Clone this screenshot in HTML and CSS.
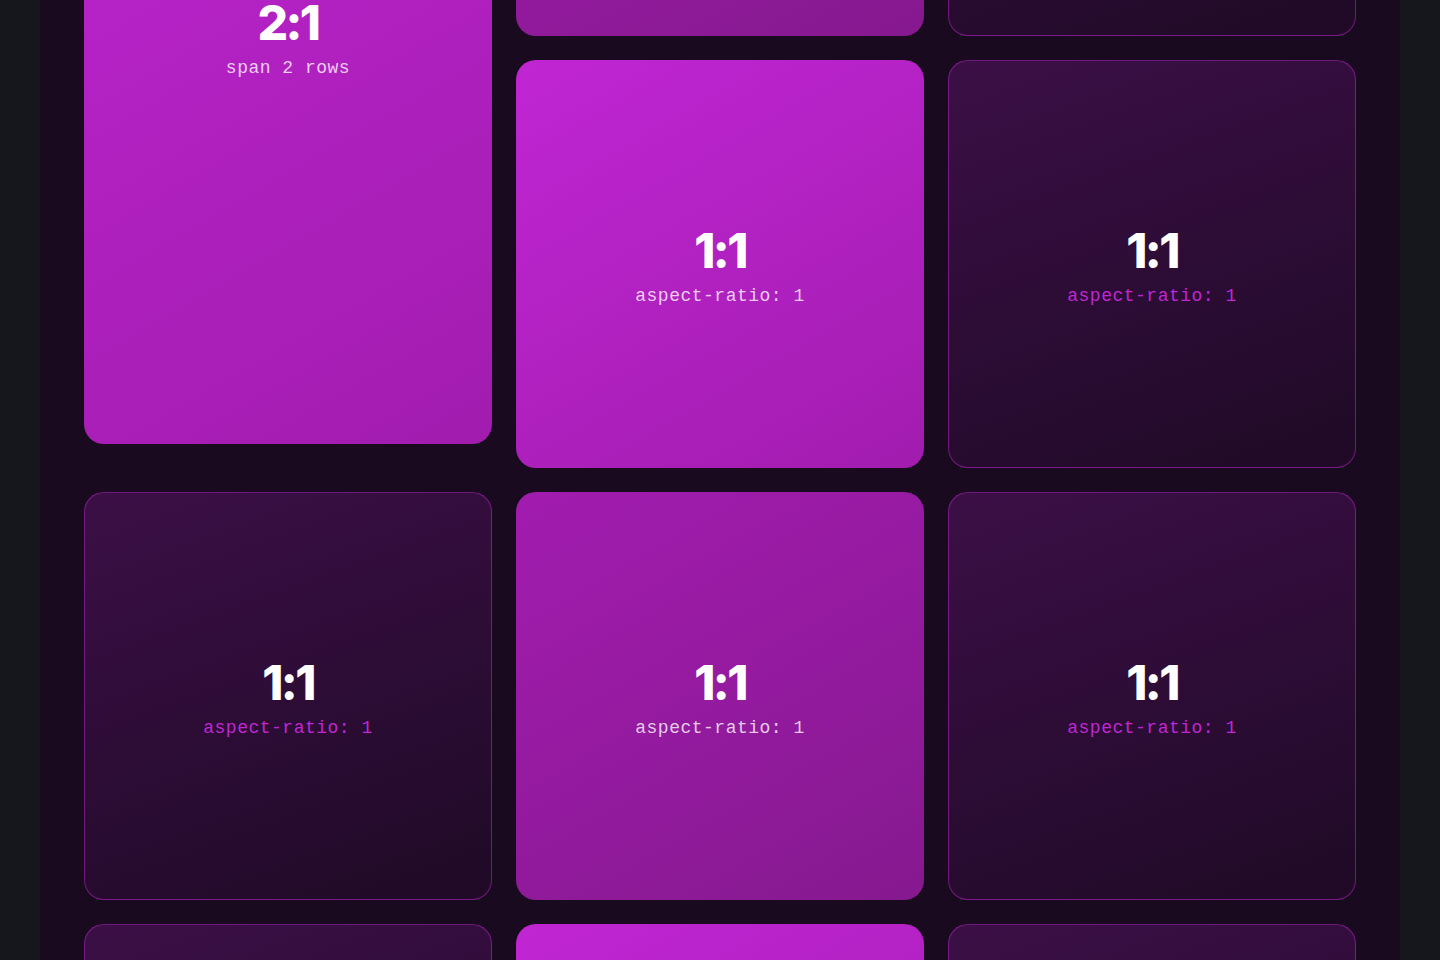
FILE: index.html
```html
<!DOCTYPE html>
<html lang="en">
<head>
<meta charset="utf-8">
<title>Aspect ratio grid</title>
<link rel="stylesheet" href="styles.css">
</head>
<body>
<main class="page">
  <section class="grid">
    <div class="tile tile-bright tile-tall">
      <div class="ratio">2:1</div>
      <div class="label">span 2 rows</div>
    </div>
    <div class="tile tile-mid">
      <div class="ratio">1:1</div>
      <div class="label">aspect-ratio: 1</div>
    </div>
    <div class="tile tile-dark">
      <div class="ratio">1:1</div>
      <div class="label">aspect-ratio: 1</div>
    </div>
    <div class="tile tile-bright">
      <div class="ratio">1:1</div>
      <div class="label">aspect-ratio: 1</div>
    </div>
    <div class="tile tile-dark">
      <div class="ratio">1:1</div>
      <div class="label">aspect-ratio: 1</div>
    </div>
    <div class="tile tile-dark">
      <div class="ratio">1:1</div>
      <div class="label">aspect-ratio: 1</div>
    </div>
    <div class="tile tile-mid">
      <div class="ratio">1:1</div>
      <div class="label">aspect-ratio: 1</div>
    </div>
    <div class="tile tile-dark">
      <div class="ratio">1:1</div>
      <div class="label">aspect-ratio: 1</div>
    </div>
    <div class="tile tile-dark">
      <div class="ratio">1:1</div>
      <div class="label">aspect-ratio: 1</div>
    </div>
    <div class="tile tile-bright">
      <div class="ratio">1:1</div>
      <div class="label">aspect-ratio: 1</div>
    </div>
    <div class="tile tile-dark">
      <div class="ratio">1:1</div>
      <div class="label">aspect-ratio: 1</div>
    </div>
  </section>
</main>
</body>
</html>
```

FILE: styles.css
```css
html, body {
  margin: 0;
  padding: 0;
}

body {
  background: #15171c;
  font-family: Inter, "Noto Sans", sans-serif;
  height: 960px;
  overflow: hidden;
}

.page {
  width: 1360px;
  margin: 0 auto;
  box-sizing: border-box;
  padding: 0 44px 44px;
  background: #1a0a1f;
  min-height: 960px;
}

.grid {
  display: grid;
  grid-template-columns: repeat(3, 1fr);
  gap: 24px;
  margin-top: -372px;
}

.tile {
  aspect-ratio: 1;
  border-radius: 20px;
  box-sizing: border-box;
  display: flex;
  flex-direction: column;
  align-items: center;
  justify-content: center;
  padding-top: 6px;
  color: #ffffff;
  align-self: start;
}

.tile-tall {
  grid-row: span 2;
  aspect-ratio: 1 / 2;
}

.tile-bright {
  background: linear-gradient(150deg, #c026d3 0%, #a21caf 100%);
}

.tile-mid {
  background: linear-gradient(150deg, #a21caf 0%, #86198f 100%);
}

.tile-dark {
  background: linear-gradient(160deg, #3b0f46 0%, #1f0a26 100%);
  border: 1px solid rgba(192, 38, 211, 0.5);
}

.ratio {
  font-family: Inter, "Noto Sans", sans-serif;
  font-weight: 800;
  font-size: 48px;
  line-height: 1;
  letter-spacing: -0.055em;
}

.label {
  margin-top: 11px;
  font-family: "Liberation Mono", "DejaVu Sans Mono", monospace;
  font-size: 18px;
  letter-spacing: 0.5px;
  line-height: 1.2;
  color: rgba(255, 255, 255, 0.78);
}

.tile-dark .label {
  color: #c026d3;
}
```
